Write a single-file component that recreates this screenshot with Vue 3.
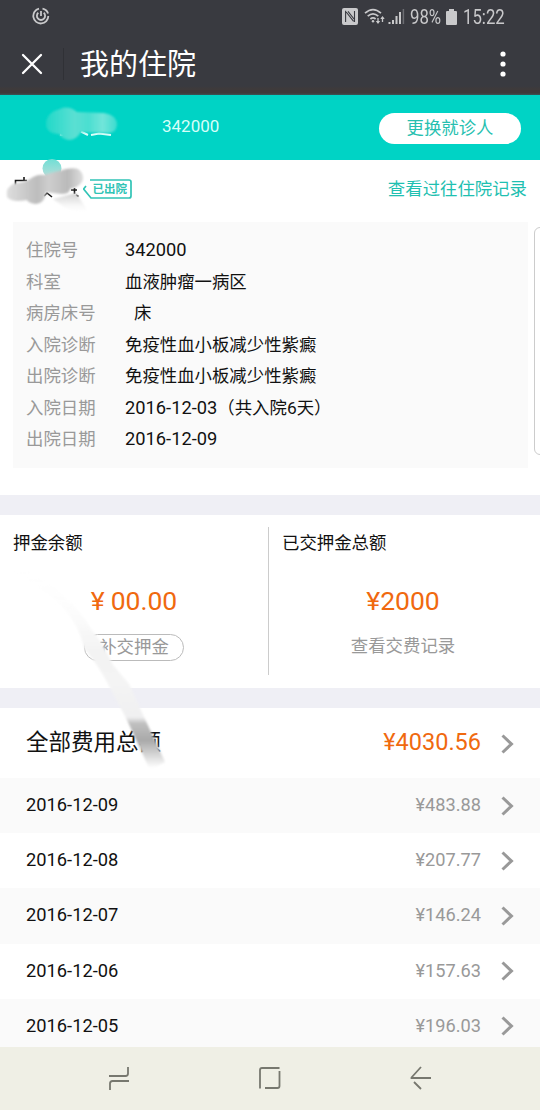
<script setup>
const details = [
  { label: '住院号', num: '342000' },
  { label: '科室', text: '血液肿瘤一病区' },
  { label: '病房床号', text: '床', indent: true },
  { label: '入院诊断', text: '免疫性血小板减少性紫癜' },
  { label: '出院诊断', text: '免疫性血小板减少性紫癜' },
  { label: '入院日期', num: '2016-12-03', text: '（共入院6天）' },
  { label: '出院日期', num: '2016-12-09' },
]
const bills = [
  { date: '2016-12-09', amount: '¥483.88' },
  { date: '2016-12-08', amount: '¥207.77' },
  { date: '2016-12-07', amount: '¥146.24' },
  { date: '2016-12-06', amount: '¥157.63' },
  { date: '2016-12-05', amount: '¥196.03' },
]
</script>

<template>
  <div class="phone">
    <header class="top">
      <div class="status">
        <svg class="spin" width="18" height="18" viewBox="0 0 18 18" fill="none" stroke="#c9c9cb">
          <path d="M7 1.7A7.5 7.5 0 1 0 16.3 9M10.5 1.7A7.5 7.5 0 0 1 16.1 6.5" stroke-width="1.8" />
          <path d="M6.3 5.8A4.1 4.1 0 1 0 11.7 5.8" stroke-width="1.8" />
          <path d="M9 4V9" stroke-width="1.8" />
        </svg>
        <div class="status-right">
          <svg class="nfc" width="16" height="17" viewBox="0 0 16 17">
            <rect width="16" height="17" rx="2" fill="#c9c9cb" />
            <path d="M3.6 2.800V14M4.200 4L11.600 13.400M6 3.400L12 11M12.500 14V3" fill="none" stroke="#393a40" stroke-width="1.1" />
          </svg>
          <svg class="wifi" width="22" height="17" viewBox="0 0 22 17" fill="none" stroke="#c9c9cb" stroke-width="1.7">
            <path d="M1 5.2Q9 -2 17 5.2M3.7 8.2Q9 3.4 14.3 8.2M6.4 11Q9 8.7 11.6 11" />
            <circle cx="9" cy="13.2" r="1.2" fill="#c9c9cb" stroke="none" />
            <path d="M14 10v5M18.5 14V9" stroke-width="1.3" />
            <path d="M11.8 13h4.4L14 16zM16.3 11h4.4L18.5 8z" fill="#c9c9cb" stroke="none" />
          </svg>
          <svg class="signal" width="17" height="17" viewBox="0 0 17 17" fill="none" stroke="#c9c9cb" stroke-width="2">
            <path d="M1.5 16v-2M5 16v-4M8.5 16V8M12 16V4" />
            <path d="M15.4 16V1" stroke="#6c6d72" stroke-width="1.5" />
          </svg>
          <span class="percent">98%</span>
          <svg class="battery" width="11" height="16" viewBox="0 0 11 16">
            <path d="M3 0h5v2h2q1 0 1 1v12q0 1-1 1H1q-1 0-1-1V3q0-1 1-1h2z" fill="#c9c9cb" />
          </svg>
          <span class="clock">15:22</span>
        </div>
      </div>
      <div class="titlebar">
        <svg class="close" width="22" height="22" viewBox="0 0 22 22" stroke="#fff" stroke-width="2.3" stroke-linecap="round">
          <path d="M2 2L20 20M20 2L2 20" />
        </svg>
        <i class="rule"></i>
        <h1>我的住院</h1>
        <svg class="more" width="6" height="26" viewBox="0 0 6 26" fill="#fff">
          <circle cx="3" cy="3" r="2.6" /><circle cx="3" cy="13" r="2.6" /><circle cx="3" cy="23" r="2.6" />
        </svg>
      </div>
    </header>

    <section class="patient">
      <span class="patient-no">342000</span>
      <button class="switch">更换就诊人</button>
    </section>

    <section class="stay">
      <div class="stay-head">
        <div class="tag">
          <svg width="49" height="20" viewBox="0 0 49 20" fill="none" stroke="#31c4b6" stroke-width="1.7">
            <path d="M7 1H46Q48 1 48 3V17Q48 19 46 19H8L1 10.6Q.6 10 1 9.4L3 7" />
          </svg>
          <span>已出院</span>
        </div>
        <a class="history">查看过往住院记录</a>
      </div>
      <dl class="card">
        <div v-for="d in details" :key="d.label" class="detail">
          <dt>{{ d.label }}</dt>
          <dd :class="{ indent: d.indent }"><span v-if="d.num" class="num">{{ d.num }}</span><span v-if="d.text">{{ d.text }}</span></dd>
        </div>
      </dl>
      <i class="edge"></i>
    </section>

    <section class="deposit">
      <div class="half first">
        <h2>押金余额</h2>
        <p class="money"><span class="yen">¥</span>00.00</p>
        <button class="topup">补交押金</button>
      </div>
      <div class="half second">
        <h2>已交押金总额</h2>
        <p class="money">¥2000</p>
        <a class="paid">查看交费记录</a>
      </div>
    </section>

    <section class="fees">
      <div class="total">
        <span class="total-label">全部费用总额</span>
        <span class="total-amount">¥4030.56</span>
        <svg class="chev" width="13" height="20" viewBox="0 0 13 20"><path d="M1.5 1.5L10.5 10L1.5 18.5" /></svg>
      </div>
      <div v-for="b in bills" :key="b.date" class="bill">
        <span class="date">{{ b.date }}</span>
        <span class="amount">{{ b.amount }}</span>
        <svg class="chev" width="13" height="20" viewBox="0 0 13 20"><path d="M1.5 1.5L10.5 10L1.5 18.5" /></svg>
      </div>
    </section>

    <nav class="keys">
      <svg width="22" height="24" viewBox="0 0 22 24"><path d="M1 10H17.5Q20 10 20 7.5V1M21 15H4.500Q2 15 2 17.500V24" /></svg>
      <svg width="22" height="24" viewBox="0 0 22 24"><path d="M1 22.500V4Q1 2 3 2H20.500M6 22H18.500Q20.500 22 20.500 20V5" /></svg>
      <svg width="22" height="24" viewBox="0 0 22 24"><path d="M11 1L1.500 11.500V12H21M4 16L11 23" /></svg>
    </nav>

    <!-- privacy brush strokes over names and figures -->
    <svg class="smudge" width="540" height="1110" viewBox="0 0 540 1110">
      <defs>
        <filter id="soft" x="-20%" y="-20%" width="140%" height="140%"><feGaussianBlur stdDeviation="1.2" /></filter>
        <linearGradient id="teal" x1="0" x2="1" y1="0" y2="0">
          <stop offset="0" stop-color="#22d8c9" /><stop offset=".4" stop-color="#5be0d3" />
          <stop offset=".6" stop-color="#4bdfd1" /><stop offset=".8" stop-color="#72e5da" /><stop offset="1" stop-color="#3cdccf" />
        </linearGradient>
        <linearGradient id="grey" x1="0" x2="1" y1="0" y2="0">
          <stop offset="0" stop-color="#dedede" /><stop offset=".4" stop-color="#bdbdbd" />
          <stop offset=".55" stop-color="#cecece" /><stop offset=".8" stop-color="#bababa" /><stop offset="1" stop-color="#dfdfdf" />
        </linearGradient>
        <linearGradient id="tail" x1="0" x2="0" y1="0" y2="1">
          <stop offset="0" stop-color="#ccc" /><stop offset="1" stop-color="#fff" stop-opacity="0" />
        </linearGradient>
        <linearGradient id="drop" x1="0" x2="0" y1="0" y2="1">
          <stop offset="0" stop-color="#70dfd5" /><stop offset="1" stop-color="#b9ddd9" />
        </linearGradient>
        <linearGradient id="streak" gradientUnits="userSpaceOnUse" x1="0" y1="556" x2="0" y2="768">
          <stop offset="0" stop-color="#fff" stop-opacity=".4" /><stop offset=".25" stop-color="#fdfdfd" />
          <stop offset=".45" stop-color="#f3f3f3" /><stop offset=".6" stop-color="#f4f4f4" /><stop offset=".76" stop-color="#f0f0f1" />
          <stop offset=".79" stop-color="#c0c0c0" /><stop offset=".87" stop-color="#a9a9a9" /><stop offset="1" stop-color="#fff" />
        </linearGradient>
      </defs>
      <path d="M60 134.500l3 .5M81 131.500l7 3.500M91 135l8-1.500 12 1.500" stroke="#e2fffb" stroke-width="2" fill="none" />
      <path d="M60 109Q68 105 77 112L104 113Q117 115 117 125Q116 134 106 133L81 132Q76 140 69 140Q62 139 59 134Q46 134 46 123Q47 112 60 109Z" fill="url(#teal)" filter="url(#soft)" />
      <path d="M15.500 186V180.500H27M24 177V180M44 196l3-3 5 4M71 190h6M74.500 188v6M76 195l2.500 1.500" stroke="#181818" stroke-width="1.600" fill="none" />
      <path d="M53 199L76 193L90 214Q68 211 60 204Z" fill="url(#tail)" filter="url(#soft)" />
      <circle cx="52" cy="168.500" r="9.500" fill="url(#drop)" />
      <path d="M15 183Q25 183 33 177Q39 174 44 175L59 171Q70 167 78 169Q84 173 83 180Q80 187 70 189Q70 194 61 194Q53 193 46 192Q45 203 36 204Q28 203 27 200Q12 203 7 197Q5 187 15 183Z" fill="url(#grey)" filter="url(#soft)" />
      <path d="M10 560Q65 585 92 630Q104 645 113 665L129 684L144 717L165 762L150 770L127 720L107 682Q98 665 84 648Q78 620 55 600Q30 580 10 572Z" fill="url(#streak)" filter="url(#soft)" />
    </svg>
  </div>
</template>

<style>
body { margin: 0; }
</style>

<style scoped>
.phone {
  position: relative;
  width: 540px;
  height: 1110px;
  overflow: hidden;
  display: flex;
  flex-direction: column;
  background: #fff;
  color: #111;
  font-family: Roboto, "Noto Sans CJK SC", sans-serif;
  font-size: 17.4px;
}
h1, h2, p, dl, dd, dt { margin: 0; font-weight: 400; }
button { font: inherit; padding: 0; box-sizing: border-box; }
svg { display: block; flex: none; }
.top { height: 95px; background: linear-gradient(#393a40 86px, #3e3a3b 89px, #3e3a3b 93px, #3b5558 95px); flex: none; }
.status { height: 33px; display: flex; justify-content: space-between; box-sizing: border-box; padding: 0 34px 0 32px; align-items: center; }
.spin { margin-top: -1px; }
.status-right { display: flex; align-items: center; color: #c9c9cb; font-size: 19.5px; }
.nfc { margin-right: 6px; }
.wifi { margin-right: 2px; }
.signal { margin-right: 5px; }
.percent, .clock { display: block; height: 24px; line-height: 26px; transform-origin: left center; transform: scaleX(.86); }
.percent { width: 31px; margin-right: 5px; }
.battery { margin-right: 6px; }
.clock { width: 43px; }
.titlebar { height: 61px; display: flex; align-items: center; padding: 0 34px 0 21px; }
.rule { width: 1px; height: 32px; background: #303136; margin-left: 20px; }
.titlebar h1 { color: #fff; font-size: 29px; line-height: 40px; margin: 3px 0 0 16px; flex: 1; }
.patient { height: 65px; flex: none; background: #00d3c5; display: flex; align-items: center; justify-content: space-between; padding: 0 19px 0 162px; }
.patient-no { color: #d6fff9; font-size: 17px; margin-top: -4px; }
.switch { width: 142px; height: 31px; margin-top: 2px; border: 0; border-radius: 16px; background: #fff; color: #27bfb0; line-height: 29px; }
.stay { position: relative; height: 335px; flex: none; }
.stay-head { height: 62px; display: flex; justify-content: space-between; box-sizing: border-box; padding: 19px 13px 0 83px; }
.tag { position: relative; width: 49px; height: 20px; }
.tag span { position: absolute; left: 9.500px; top: 0; font-size: 11.500px; line-height: 20px; font-weight: 700; color: #31c4b6; white-space: nowrap; }
.history { color: #1fc0b1; line-height: 21px; }
.card { width: 515px; height: 246px; margin-left: 13px; box-sizing: border-box; padding: 13px 14px 11px 13px; background: #fafafa; }
.detail { height: 31.500px; line-height: 31.500px; display: flex; }
.detail dt { width: 99px; color: #999; }
.detail dd { white-space: nowrap; display: flex; }
.detail dd.indent { padding-left: 9px; }
.num { font-size: 18.300px; position: relative; top: -1px; }
.edge { position: absolute; left: 534px; top: 67px; width: 20px; height: 226px; border: 1px solid #ccc; border-radius: 6px; background: #fff; }
.deposit { height: 173px; flex: none; border-top: 20px solid #efeff5; border-bottom: 20px solid #efeff5; display: flex; }
.half { flex: 1; display: flex; flex-direction: column; align-items: center; margin: 12px 0 13px; }
.half.first { flex: 0 0 268px; border-right: 1px solid #ccc; }
.half.second { padding-right: 3px; }
.half h2 { align-self: flex-start; margin: 1px 0 -1px 13px; font-size: 17.400px; line-height: 30px; }
.money { color: #f0690f; font-size: 26.500px; line-height: 36px; margin-top: 26px; }
.yen { margin-right: 6px; }
.topup { width: 100px; height: 27px; border: 1px solid #bbb; border-radius: 14px; background: #fff; color: #999; line-height: 22px; padding-bottom: 2px; margin-top: 15px; }
.paid { color: #999; line-height: 27px; margin-top: 14px; }
.fees { height: 339px; flex: none; overflow: hidden; }
.total, .bill { display: flex; align-items: center; padding: 0 26px; }
.total { height: 70px; }
.total-label, .date { flex: 1; }
.total-label { font-size: 22.500px; margin-top: -6px; }
.total-amount { color: #f0690f; font-size: 23.500px; margin-top: -3px; }
.bill { height: 55.200px; background: #fff; font-size: 18.300px; }
.bill:nth-child(even) { background: #fafafa; }
.date { margin-top: -2px; }
.amount { color: #999; font-size: 18.200px; margin-top: -2px; }
.chev { margin-left: 20px; fill: none; stroke: #999; stroke-width: 3; }
.total .chev { margin-top: 2px; }
.keys { height: 63px; flex: none; background: #efefe5; display: flex; justify-content: space-between; align-items: center; box-sizing: border-box; padding: 0 108px; }
.keys svg { fill: none; stroke: #77786f; stroke-width: 1.800; margin-top: -1px; }
.smudge { position: absolute; left: 0; top: 0; pointer-events: none; }
</style>
